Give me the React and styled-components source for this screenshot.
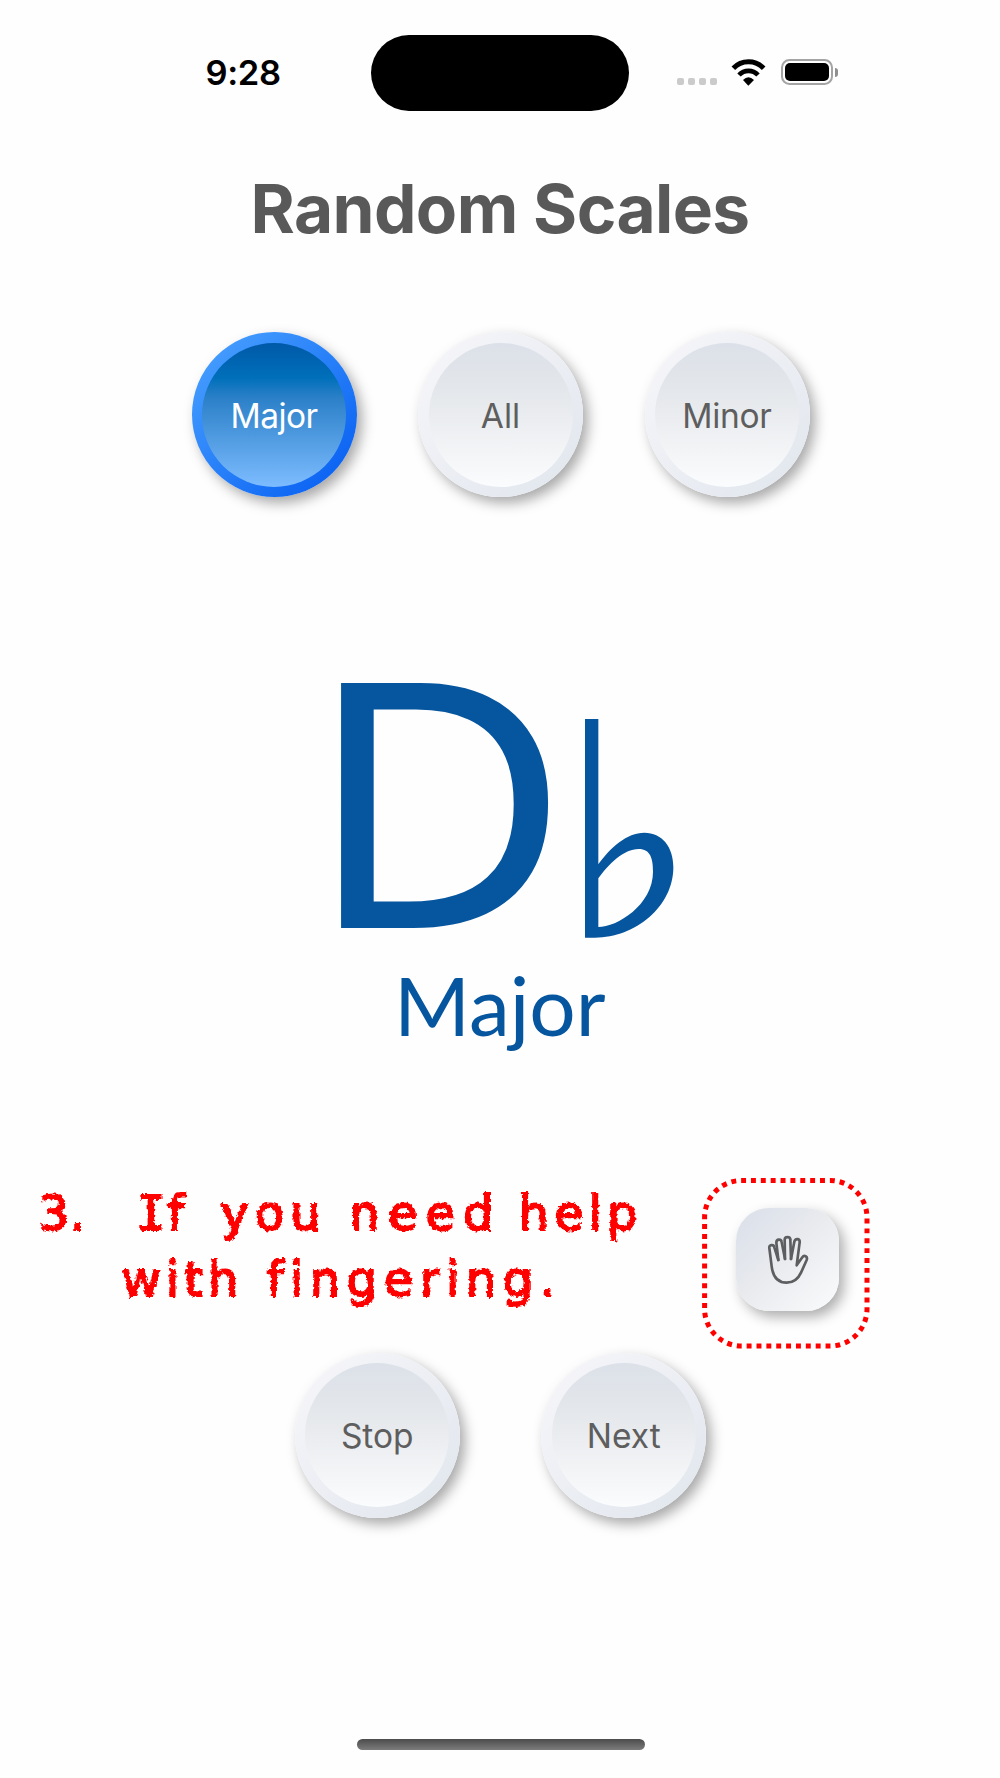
import React from 'react'
import styled, { createGlobalStyle } from 'styled-components'

const GlobalStyle = createGlobalStyle`
    * {
        box-sizing: border-box;
    }
    body {
        margin: 0;
        background: #fefefe;
        font-family: Inter, "Liberation Sans", sans-serif;
    }
`

const Screen = styled.main`
    width: 1000px;
    height: 1778px;
    display: flex;
    flex-direction: column;
    align-items: center;
    overflow: hidden;
    background: #fefefe;
`

const StatusBar = styled.header`
    width: 100%;
    height: 146px;
    padding: 35px 162px 0 205.4px;
    display: grid;
    grid-template-columns: 166px 258px 1fr;
    align-items: start;
`

const Time = styled.time`
    font-size: 34.5px;
    font-weight: 600;
    line-height: 76px;
    letter-spacing: -0.3px;
    color: #000;
`

const Island = styled.div`
    height: 76px;
    border-radius: 38px;
    background: #000;
`

const StatusIcons = styled.div`
    display: flex;
    align-items: center;
    justify-content: flex-end;
    height: 74px;
`

const Signal = styled.div`
    display: flex;
    gap: 4px;
    padding-top: 18px;
    margin-right: 14.5px;
`

const Dot = styled.span`
    width: 7px;
    height: 7px;
    border-radius: 2px;
    background: #cbcbcb;
`

const Battery = styled.div`
    width: 51.5px;
    height: 26.5px;
    margin: 0 2.5px 0 15px;
    padding: 2px;
    border: 2px solid #a4a4a4;
    border-radius: 8.5px;
    &::before {
        content: '';
        display: block;
        height: 100%;
        border-radius: 5px;
        background: #000;
    }
`

const BatteryCap = styled.span`
    width: 3px;
    height: 9px;
    border-radius: 0 4px 4px 0;
    background: #8f8f8f;
`

const Title = styled.h1`
    height: 126px;
    margin: 0;
    font-size: 67.5px;
    font-weight: 700;
    line-height: 126px;
    letter-spacing: -0.6px;
    color: #595959;
`

const ButtonRow = styled.div`
    display: flex;
    justify-content: center;
    gap: ${(props) => props.$gap}px;
    margin-top: ${(props) => props.$top}px;
    padding-left: 1px;
`

const RoundButton = styled.button`
    width: 165px;
    height: 165px;
    padding: 10.5px;
    border: 0;
    border-radius: 50%;
    background: ${(props) =>
        props.$active
            ? 'linear-gradient(135deg, #479fff 8%, #0860f2 92%)'
            : 'linear-gradient(135deg, #f5f5f9 10%, #e2e7ee 92%)'};
    box-shadow: 5px 6px 13px rgba(0, 0, 0, 0.34), -4px -4px 10px rgba(255, 255, 255, 0.8);
`

const Face = styled.span`
    display: flex;
    align-items: center;
    justify-content: center;
    width: 144px;
    height: 144px;
    padding-top: 2px;
    border-radius: 50%;
    font-family: Inter, sans-serif;
    font-size: 33.5px;
    font-weight: 400;
    letter-spacing: ${(props) => props.$spacing || 0}px;
    color: ${(props) => (props.$active ? '#fff' : '#5e5e5e')};
    background: ${(props) =>
        props.$active
            ? 'linear-gradient(180deg, #0059a8 0%, #006fba 24%, #2b80c8 38%, #7dbcff 100%)'
            : 'linear-gradient(180deg, #dce1e9 0%, #e3e6ea 30%, #fbfcfd 100%)'};
`

const ScaleCard = styled.section`
    width: 340px;
    height: 443px;
    margin-top: 167px;
    color: #06559f;
`

const Note = styled.div`
    display: flex;
    height: 288px;
    padding-left: 11px;
`

const NoteLetter = styled.span`
    width: 244px;
    font-family: "Noto Sans", sans-serif;
    font-size: 343px;
    line-height: 262px;
    transform: scaleX(1.055);
    transform-origin: 0 0;
    margin-left: -35px;
    margin-right: 35px;
`

const FlatSign = styled.svg`
    width: 88.7px;
    height: 218.7px;
    margin-top: 54.5px;
    flex: none;
    fill: currentColor;
`

const Quality = styled.div`
    font-family: Lato, sans-serif;
    font-size: 82px;
    line-height: 104px;
    padding-left: 64px;
`

const HelpRow = styled.section`
    width: 100%;
    height: 171px;
    margin-top: 70.5px;
    padding-left: 38.5px;
    display: grid;
    grid-template-columns: 663px 168px;
`

const Hint = styled.p`
    margin: 0;
    padding-top: 2px;
    font-family: "DejaVu Sans", sans-serif;
    font-size: 48px;
    line-height: 66px;
    color: #ff0000;
    -webkit-text-stroke: 1.8px #ff0000;
    filter: url(#chalk);
`

const HintLine = styled.span`
    display: flex;
    padding-left: ${(props) => props.$indent || 0}px;
    white-space: nowrap;
`

const Word = styled.span`
    width: ${(props) => props.$width}px;
    letter-spacing: ${(props) => props.$spacing}px;
`

const SerifLetter = styled.span`
    font-family: "DejaVu Sans Mono", monospace;
`

const Highlight = styled.div`
    display: grid;
    place-items: center;
    > * {
        grid-area: 1 / 1;
    }
`

const HandButton = styled.button`
    display: grid;
    place-items: center;
    width: 103px;
    height: 103px;
    margin-left: 4px;
    margin-top: -7px;
    padding: 0;
    border: 0;
    border-radius: 33px;
    background: linear-gradient(135deg, #dbe0ea 5%, #e8eaee 45%, #fafbfc 100%);
    box-shadow: 5px 6px 13px rgba(0, 0, 0, 0.32), -4px -4px 10px rgba(255, 255, 255, 0.8);
`

const HomeIndicator = styled.div`
    width: 288px;
    height: 11px;
    margin: auto 0 28px 1px;
    border-radius: 6px;
    background: linear-gradient(180deg, #4c4c4c, #7c7c7c);
`

const WifiIcon = () => (
    <svg width="35" height="27" viewBox="394 86 105 81" fill="none" stroke="#000">
        <path d="M401 114 A63 63 0 0 1 492 114" strokeWidth="15" />
        <path d="M418 134 A39 39 0 0 1 475 134" strokeWidth="14" />
        <path d="M430 149 Q446 133 463 149 L446 166 Z" fill="#000" stroke="none" />
    </svg>
)

const HandIcon = () => (
    <svg width="42" height="50" viewBox="231 225 126 150" fill="none" stroke="#5c5e60" strokeWidth="8" strokeLinecap="round" strokeLinejoin="round">
        <path d="M265 300 L253 262 C251 252 237 254 238 264 L245 319 C249 353 264 368 290 368 C312 368 324 358 333 338 L350 300 C354 289 342 284 337 292 L320 316 L329 247 C330 235 316 234 313 245 L303 297" />
        <path d="M265 300 L259 248 C259 236 274 236 275 246 L285 297" />
        <path d="M285 297 L284 239 C284 229 301 229 301 239 L303 297" />
    </svg>
)

const DottedFrame = () => (
    <svg width="168" height="171" viewBox="0 0 168 171" fill="none">
        <rect x="2.6" y="2.5" width="162.4" height="165.5" rx="37" stroke="#ff0000" strokeWidth="5" pathLength="120" strokeDasharray="1 1" strokeDashoffset="0.1" />
    </svg>
)

// roughens the edges of the hint so it reads as chalk
const ChalkFilter = () => (
    <svg width="0" height="0" style={{ position: 'absolute' }}>
        <filter id="chalk" x="-5%" y="-10%" width="110%" height="120%">
            <feTurbulence type="fractalNoise" baseFrequency="0.3" numOctaves="2" seed="4" result="noise" />
            <feDisplacementMap in="SourceGraphic" in2="noise" scale="5" xChannelSelector="R" yChannelSelector="G" />
        </filter>
    </svg>
)

const CircleButton = ({ label, active, spacing }) => (
    <RoundButton $active={active}>
        <Face $active={active} $spacing={spacing}>{label}</Face>
    </RoundButton>
)

const App = () => {
    return (
        <Screen>
            <GlobalStyle />
            <ChalkFilter />
            <StatusBar>
                <Time>9:28</Time>
                <Island />
                <StatusIcons>
                    <Signal>
                        <Dot /><Dot /><Dot /><Dot />
                    </Signal>
                    <WifiIcon />
                    <Battery />
                    <BatteryCap />
                </StatusIcons>
            </StatusBar>
            <Title>Random Scales</Title>
            <ButtonRow $gap={61.5} $top={60.4}>
                <CircleButton label="Major" active spacing={-0.6} />
                <CircleButton label="All" />
                <CircleButton label="Minor" spacing={-0.3} />
            </ButtonRow>
            <ScaleCard>
                <Note>
                    <NoteLetter>D</NoteLetter>
                    <FlatSign viewBox="794 177 266 656">
                        <path fillRule="evenodd" d="M794 177 H834 V613 C870 562 920 518 972 518 C1025 518 1059 560 1059 622 C1059 740 945 833 824 833 H794 Z M834 655 C865 612 910 567 955 567 C990 567 998 595 998 635 C998 735 890 801 834 801 Z" />
                    </FlatSign>
                </Note>
                <Quality>Major</Quality>
            </ScaleCard>
            <HelpRow>
                <Hint>
                    <HintLine>
                        <Word $width={98} $spacing={1}>3.</Word>
                        <Word $width={84} $spacing={2}><SerifLetter>I</SerifLetter>f</Word>
                        <Word $width={129} $spacing={6}>you</Word>
                        <Word $width={169} $spacing={8}>need</Word>
                        <Word $width={130} $spacing={5}>help</Word>
                    </HintLine>
                    <HintLine $indent={83}>
                        <Word $width={145} $spacing={5}>with</Word>
                        <Word $width={300} $spacing={6.5}>fingering.</Word>
                    </HintLine>
                </Hint>
                <Highlight>
                    <DottedFrame />
                    <HandButton>
                        <HandIcon />
                    </HandButton>
                </Highlight>
            </HelpRow>
            <ButtonRow $gap={81.5} $top={4}>
                <CircleButton label="Stop" />
                <CircleButton label="Next" />
            </ButtonRow>
            <HomeIndicator />
        </Screen>
    )
}

export default App
